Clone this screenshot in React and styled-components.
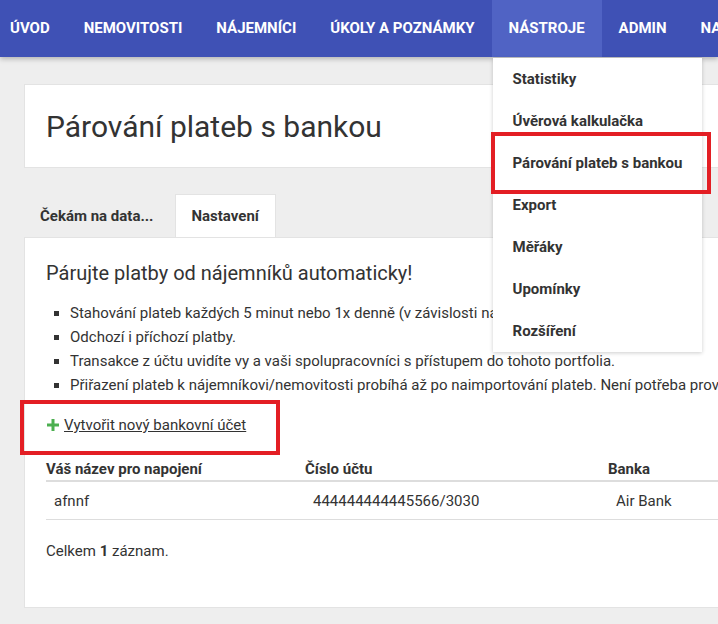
import styled, { createGlobalStyle } from "styled-components";

const GlobalStyle = createGlobalStyle`
  html, body {
    margin: 0;
    padding: 0;
    background: #eeeeee;
    font-family: Roboto, "Liberation Sans", sans-serif;
    color: #333;
    overflow: hidden;
  }
`;

const Page = styled.div`
  width: 718px;
  height: 624px;
  position: relative;
  overflow: hidden;
`;

const NavBar = styled.nav`
  display: flex;
  height: 57px;
  background: #3f51b5;
  box-shadow: 0 2px 5px rgba(0, 0, 0, 0.25);
  position: relative;
  z-index: 5;
`;

const NavItem = styled.div`
  position: relative;
  display: flex;
  align-items: center;
  padding: 0 17px;
  padding-left: ${(p) => (p.first ? "10px" : "17px")};
  padding-bottom: 2px;
  font-size: 15px;
  font-weight: 700;
  color: #fff;
  white-space: nowrap;
  background: ${(p) => (p.active ? "#5063c4" : "transparent")};
`;

const Dropdown = styled.div`
  position: absolute;
  top: 58px;
  left: 1px;
  width: 209px;
  background: #fff;
  box-shadow: 0 1px 4px rgba(0, 0, 0, 0.2);
  display: flex;
  flex-direction: column;
`;

const DropItem = styled.div`
  height: 42px;
  display: flex;
  align-items: center;
  padding: 0 20px;
  font-size: 15px;
  font-weight: 700;
  color: #333;
`;

const Highlight = styled.div`
  position: absolute;
  border: 4px solid #e31e24;
  pointer-events: none;
  left: ${(p) => p.l}px;
  top: ${(p) => p.t}px;
  width: ${(p) => p.w}px;
  height: ${(p) => p.h}px;
  box-sizing: border-box;
`;

const Main = styled.main`
  padding: 27px 0 0 24px;
`;

const TitleCard = styled.div`
  background: #fff;
  border: 1px solid #e3e3e3;
  border-right: none;
  height: 82px;
  display: flex;
  align-items: center;
  padding-left: 21px;
`;

const Title = styled.h1`
  margin: 0;
  font-size: 30px;
  font-weight: 400;
  color: #333;
`;

const Tabs = styled.div`
  display: flex;
  margin-top: 26px;
  height: 43px;
`;

const Tab = styled.div`
  display: flex;
  align-items: center;
  padding: 0 16px 0 15px;
  margin-right: 5px;
  font-size: 15px;
  font-weight: 700;
  color: #333;
  background: ${(p) => (p.active ? "#fff" : "transparent")};
  border: 1px solid ${(p) => (p.active ? "#e3e3e3" : "transparent")};
  border-bottom: none;
`;

const ContentCard = styled.div`
  background: #fff;
  border: 1px solid #e3e3e3;
  border-right: none;
  padding: 23px 0 0 21px;
  height: 371px;
  box-sizing: border-box;
`;

const Heading = styled.h2`
  margin: 0 0 16px;
  font-size: 20px;
  font-weight: 400;
  color: #333;
`;

const List = styled.ul`
  margin: 0;
  padding: 0 0 0 24px;
  list-style: square;
  font-size: 15px;
  line-height: 24px;
  white-space: nowrap;
`;

const LinkRow = styled.div`
  position: relative;
  display: flex;
  align-items: center;
  gap: 4px;
  margin-top: 16px;
  height: 24px;
  font-size: 15px;
`;

const CreateLink = styled.a`
  color: #333;
  text-decoration: underline;
`;

const Table = styled.div`
  margin-top: 24px;
  width: 700px;
`;

const Row = styled.div`
  display: grid;
  grid-template-columns: 259px 303px 1fr;
  border-bottom: ${(p) => (p.head ? "2px" : "1px")} solid #ddd;
  height: ${(p) => (p.head ? "19px" : "37px")};
  align-items: ${(p) => (p.head ? "start" : "center")};
  line-height: ${(p) => (p.head ? "16px" : "normal")};
  font-size: 15px;
  font-weight: ${(p) => (p.head ? 700 : 400)};
`;

const Cell = styled.div`
  padding-left: ${(p) => (p.head ? "0" : "8px")};
`;

const Summary = styled.div`
  margin-top: 22px;
  font-size: 15px;
`;

function Plus() {
  return (
    <svg width="14" height="14" viewBox="0 0 14 14">
      <path d="M5.5 1h3v4.5H13v3H8.5V13h-3V8.5H1v-3h4.5z" fill="#4caf50" />
    </svg>
  );
}

const navItems = [
  "ÚVOD",
  "NEMOVITOSTI",
  "NÁJEMNÍCI",
  "ÚKOLY A POZNÁMKY",
  "NÁSTROJE",
  "ADMIN",
  "NASTAVENÍ",
];

const menu = [
  "Statistiky",
  "Úvěrová kalkulačka",
  "Párování plateb s bankou",
  "Export",
  "Měřáky",
  "Upomínky",
  "Rozšíření",
];

export default function App() {
  return (
    <Page>
      <GlobalStyle />
      <NavBar>
        {navItems.map((n, i) => (
          <NavItem key={n} first={i === 0} active={n === "NÁSTROJE"}>
            {n}
            {n === "NÁSTROJE" && (
              <Dropdown>
                {menu.map((m) => (
                  <DropItem key={m}>{m}</DropItem>
                ))}
                <Highlight l={-2} t={74} w={220} h={62} />
              </Dropdown>
            )}
          </NavItem>
        ))}
      </NavBar>
      <Main>
        <TitleCard>
          <Title>Párování plateb s bankou</Title>
        </TitleCard>
        <Tabs>
          <Tab>Čekám na data...</Tab>
          <Tab active>Nastavení</Tab>
        </Tabs>
        <ContentCard>
          <Heading>Párujte platby od nájemníků automaticky!</Heading>
          <List>
            <li>Stahování plateb každých 5 minut nebo 1x denně (v závislosti na bance).</li>
            <li>Odchozí i příchozí platby.</li>
            <li>Transakce z účtu uvidíte vy a vaši spolupracovníci s přístupem do tohoto portfolia.</li>
            <li>Přiřazení plateb k nájemníkovi/nemovitosti probíhá až po naimportování plateb. Není potřeba provádět nic dalšího.</li>
          </List>
          <LinkRow>
            <Plus />
            <CreateLink href="#">Vytvořit nový bankovní účet</CreateLink>
            <Highlight l={-26} t={-13} w={260} h={55} />
          </LinkRow>
          <Table>
            <Row head>
              <Cell head>Váš název pro napojení</Cell>
              <Cell head>Číslo účtu</Cell>
              <Cell head>Banka</Cell>
            </Row>
            <Row>
              <Cell>afnnf</Cell>
              <Cell>444444444445566/3030</Cell>
              <Cell>Air Bank</Cell>
            </Row>
          </Table>
          <Summary>
            Celkem <b>1</b> záznam.
          </Summary>
        </ContentCard>
      </Main>
    </Page>
  );
}
